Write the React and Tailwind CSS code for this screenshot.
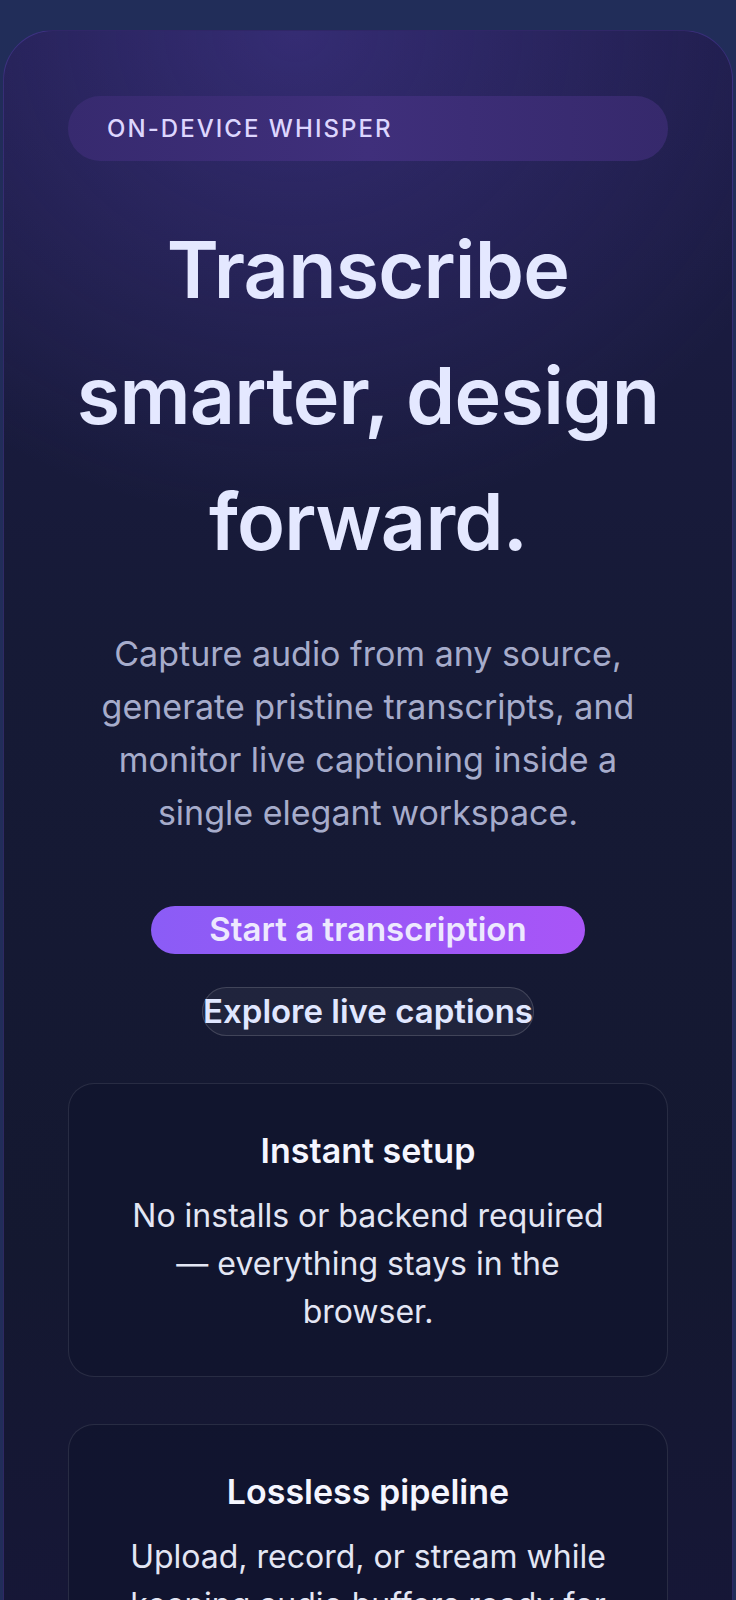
import React from "react";

const features = [
  {
    title: "Instant setup",
    body: "No installs or backend required — everything stays in the browser.",
  },
  {
    title: "Lossless pipeline",
    body: "Upload, record, or stream while keeping audio buffers ready for Whisper to process.",
  },
];

const App = () => {
  return (
    <div className="min-h-screen bg-[#212d59] px-[3px] pt-[30px] font-['Inter',sans-serif]">
      <section className="rounded-[50px] border border-[#7c5cf0]/25 bg-[radial-gradient(ellipse_75%_28%_at_40%_0%,rgba(88,68,180,0.4),transparent_100%),linear-gradient(180deg,#1d1c48_0%,#161a36_35%,#141830_70%,#17163a_100%)] px-16 pt-[65px] pb-16">
        {/* Badge */}
        <div className="flex h-[65px] items-center rounded-full bg-[linear-gradient(90deg,#372a6f_0%,#3f2f7b_50%,#36296c_100%)] pl-[39px]">
          <span className="text-[24px] font-medium uppercase tracking-[0.085em] text-[#ddd6fe]">
            On-device Whisper
          </span>
        </div>

        {/* Hero */}
        <h1 className="mt-[45px] text-center text-[79px] font-semibold leading-[126px] tracking-[-0.01em] text-[#e4e8ff]">
          Transcribe smarter, design forward.
        </h1>
        <p className="mx-auto mt-[43px] max-w-[580px] text-center text-[34px] leading-[53px] text-[#a6accb]">
          Capture audio from any source, generate pristine transcripts, and
          monitor live captioning inside a single elegant workspace.
        </p>

        {/* Actions */}
        <div className="mt-[67px] flex flex-col items-center gap-[33px]">
          <button className="flex h-[48px] items-center rounded-full bg-[linear-gradient(90deg,#8b5cf6,#a855f7)] px-[58px] text-[33px] font-semibold text-[#ede9fe]">
            Start a transcription
          </button>
          <button className="flex h-[49px] items-center rounded-full border border-white/15 bg-white/5 text-[33px] font-semibold text-[#e0e7ff]">
            Explore live captions
          </button>
        </div>

        {/* Feature cards */}
        <div className="mt-[47px] flex flex-col gap-[47px]">
          {features.map((f) => (
            <div
              key={f.title}
              className="rounded-[26px] border border-white/10 bg-[#10142e]/75 px-[48px] pt-[46px] pb-[40px] text-center"
            >
              <h3 className="text-[34px] font-semibold leading-[42px] text-[#f5f6ff]">
                {f.title}
              </h3>
              <p className="mt-[20px] text-[32px] leading-[48px] text-[#e3e6f4]">
                {f.body}
              </p>
            </div>
          ))}
        </div>
      </section>
    </div>
  );
};

export default App;
